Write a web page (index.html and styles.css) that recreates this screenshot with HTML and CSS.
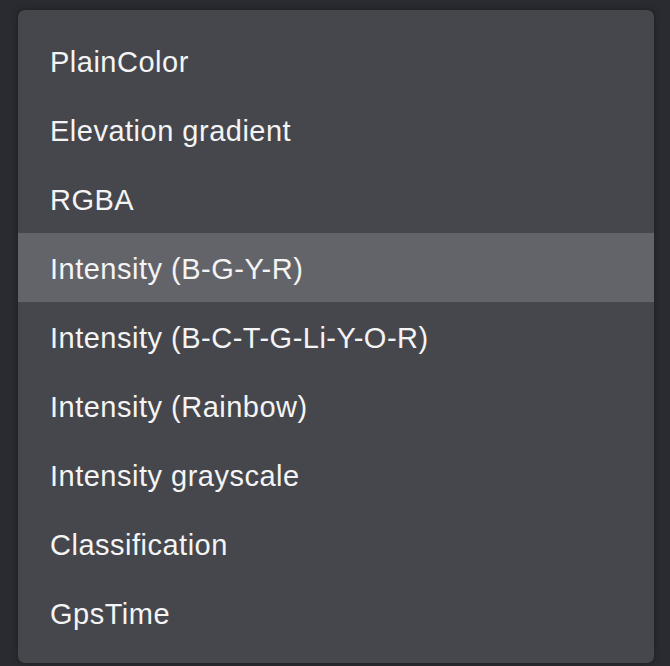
FILE: index.html
```html
<!DOCTYPE html>
<html>

<head>
    <title>Point color</title>
    <link rel="stylesheet" href="styles.css">
</head>

<body>
<div class="menu">
    <ul class="menu-list">
        <li>PlainColor</li>
        <li>Elevation gradient</li>
        <li>RGBA</li>
        <li class="active">Intensity (B-G-Y-R)</li>
        <li>Intensity (B-C-T-G-Li-Y-O-R)</li>
        <li>Intensity (Rainbow)</li>
        <li>Intensity grayscale</li>
        <li>Classification</li>
        <li>GpsTime</li>
    </ul>
</div>
</body>
</html>
```

FILE: styles.css
```css
* {
    box-sizing: border-box;
}
body, html {
    padding: 0;
    margin: 0;
}
body {
    background-color: #2a2b30;
    font-family: "Liberation Sans", Arial, sans-serif;
    height: 666px;
    padding: 10px 16px 3px 18px;
}
.menu {
    background-color: #46474c;
    border-radius: 7px;
    box-shadow: 0 0 6px rgba(0,0,0,0.35);
    padding: 16px 0;
}
.menu-list {
    list-style-type: none;
    margin: 0;
    padding: 0;
}
.menu-list li {
    height: 69px;
    line-height: 66px;
    padding: 3px 0 0 32px;
    font-size: 29px;
    letter-spacing: 0.5px;
    color: #f4f4f5;
}
.menu-list li.active {
    background-color: #636469;
}
```
